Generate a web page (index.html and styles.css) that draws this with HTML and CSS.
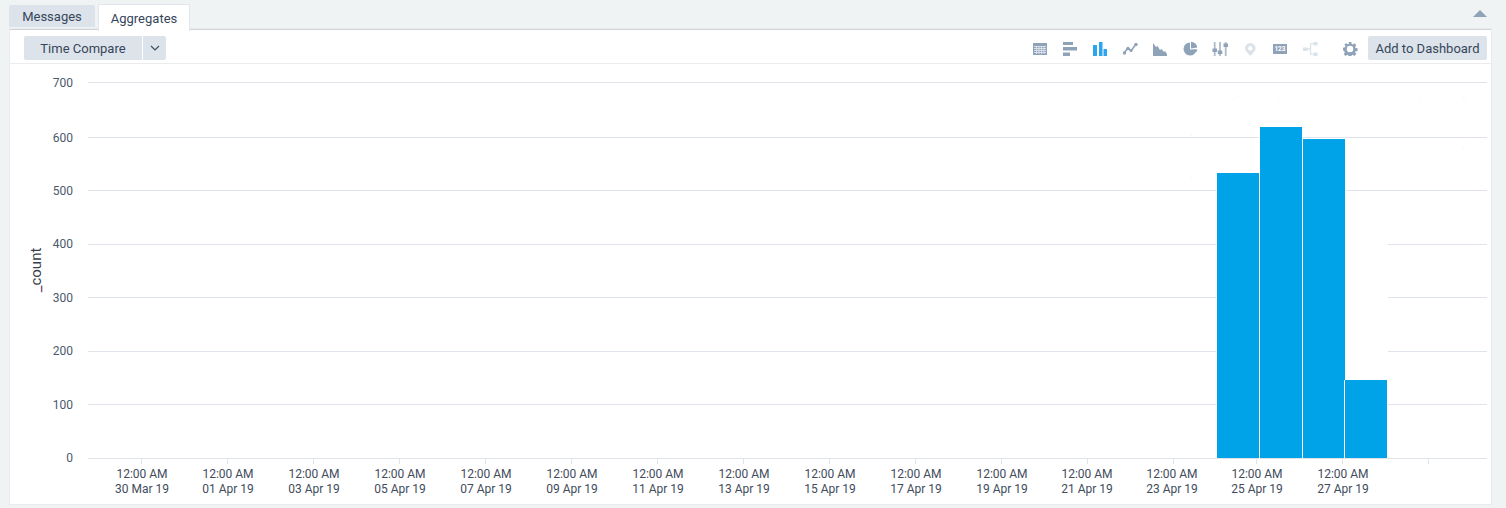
FILE: index.html
```html
<!DOCTYPE html>
<html lang="en">
<head>
<meta charset="utf-8">
<title>Aggregates</title>
<link rel="stylesheet" href="styles.css">
</head>
<body>
<div class="tabbar">
  <div class="tab">Messages</div>
  <div class="tab tab-active">Aggregates</div>
  <svg class="collapse" width="14" height="7" viewBox="0 0 14 7"><path d="M7 0L14 7H0z"/></svg>
</div>
<main class="panel">
  <div class="toolbar">
    <div class="group">
      <button class="btn btn-compare">Time Compare</button>
      <button class="btn btn-caret"><svg width="10" height="6" viewBox="0 0 10 6"><path d="M1 1l4 4 4-4" fill="none" stroke="#3d4f63" stroke-width="1.2"/></svg></button>
    </div>
    <div class="group">
      <div class="icons">
        <svg class="icon" width="16" height="16" viewBox="0 0 16 16"><path class="i" d="M1 3h14v12H1z"/><path d="M2 6.500h12M2 8.500h12M2 10.500h12M2 12.500h12M4.500 6v8M7 6v8M9.500 6v8M12 6v8" stroke="#e6eaf4" stroke-width=".8" fill="none"/></svg>
        <svg class="icon" width="16" height="16" viewBox="0 0 16 16"><path class="i" d="M1 2h10v3H1zM1 7h14v3.500H1zM1 12.500h7V16H1z"/></svg>
        <svg class="icon" width="16" height="16" viewBox="0 0 16 16"><path class="on" d="M1 5h4v11H1zM7 2h3.500v14H7zM11.500 9H15v7h-3.500z"/></svg>
        <svg class="icon" width="16" height="16" viewBox="0 0 16 16"><path d="M2 13l4-5 3 3 5-7" fill="none" stroke="#8fa3b8" stroke-width="1.600"/><circle class="i" cx="2.500" cy="13" r="1.700"/><circle class="i" cx="6" cy="8.500" r="1.700"/><circle class="i" cx="9" cy="10.500" r="1.500"/><circle class="i" cx="14" cy="4.500" r="1.700"/></svg>
        <svg class="icon" width="16" height="16" viewBox="0 0 16 16"><path class="i" d="M1 3l3 4 1.500-1L8 10l1.500-1L12 12l1-1 2 3v2H1z"/></svg>
        <svg class="icon" width="16" height="16" viewBox="0 0 16 16"><path class="i" d="M8 2.500a6.500 6.500 0 1 0 6.500 7H8z"/><path class="i" d="M9 1.800a6.500 6.500 0 0 1 6.300 5.700L9 8.500z"/><path class="i" d="M10 9.500h5.300a6 6 0 0 1-.8 2.500z"/></svg>
        <svg class="icon" width="16" height="16" viewBox="0 0 16 16"><path d="M2.700 2v14M8 2v14M13.700 2v14" stroke="#aebbc9" stroke-width="1.800"/><path class="i" d="M.5 8.500h4.500V12H.5zM5.800 10.500h4.500V14H5.800zM11.500 3.500H16V7h-4.500z"/></svg>
        <svg class="icon" width="16" height="16" viewBox="0 0 16 16"><path class="off" fill-rule="evenodd" d="M8.300 3a5.300 5.300 0 0 1 5.300 5.300c0 2.700-3 5.200-5.300 7.700C6 13.500 3 11 3 8.300A5.300 5.300 0 0 1 8.300 3zm0 3a2.200 2.200 0 1 0 0 4.400 2.200 2.200 0 0 0 0-4.400z"/></svg>
        <svg class="icon" width="16" height="16" viewBox="0 0 16 16"><path class="i" d="M1 4h14v10H1z"/><text x="8" y="11" class="num">123</text></svg>
        <svg class="icon" width="16" height="16" viewBox="0 0 16 16"><path class="off" d="M1 7.500h4.500v3.500H1zM11.500 2H15.500v3.500h-4zM11.500 12.500h4V16h-4z"/><path d="M5 9h3.500M8.500 3.700h3M8.500 14.200h3M8.500 3.700v10.500" stroke="#dbe3ea" stroke-width="1.300" fill="none"/></svg>
      </div>
      <svg class="gear" width="16" height="16" viewBox="0 0 16 16"><path class="i" fill-rule="evenodd" d="M6.500 0h3l.4 2.200 1.300.6L13.100 1.500l2.100 2.100-1.300 1.900.6 1.300 2.200.4v3l-2.200.4-.6 1.300 1.300 1.900-2.100 2.100-1.900-1.300-1.300.6-.4 2.200h-3l-.4-2.200-1.300-.6-1.900 1.300-2.100-2.100 1.300-1.900-.6-1.300L0 9.500v-3l2.200-.4.6-1.300-1.300-1.900L3.600 1.300l1.900 1.300 1.300-.6zM8 4.300a3.700 3.700 0 1 0 0 7.400 3.700 3.700 0 0 0 0-7.400z" transform="translate(1 2) scale(.875)"/></svg>
      <button class="btn btn-dash">Add to Dashboard</button>
    </div>
  </div>
  <svg class="chart" width="1481" height="440" viewBox="10 64 1481 440">
    <g class="grid">
      <path d="M88 82.500H1487M88 137.500H1259M1303 137.500H1487M88 190.500H1216M1346 190.500H1487M88 244.500H1216M1388 244.500H1487M88 297.500H1216M1388 297.500H1487M88 351.500H1216M1388 351.500H1487M88 404.500H1216M1388 404.500H1487M88 458.500H1487"/>
      <path d="M141.500 459v5M227.500 459v5M313.500 459v5M399.500 459v5M485.500 459v5M571.500 459v5M657.500 459v5M743.500 459v5M829.500 459v5M915.500 459v5M1001.500 459v5M1087.500 459v5M1173.500 459v5M1256.500 459v5M1342.500 459v5M1428.500 459v5"/>
    </g>
    <g class="dots">
      <circle cx="1191" cy="135" r=".5"/><circle cx="1191" cy="178" r=".5"/><circle cx="1237" cy="96" r=".5"/><circle cx="1234" cy="99" r=".5"/><circle cx="1280" cy="98" r=".5"/><circle cx="1277" cy="101" r=".5"/><circle cx="1420" cy="96" r=".5"/><circle cx="1463" cy="98" r=".5"/><circle cx="1466" cy="101" r=".5"/><circle cx="1463" cy="147" r=".5"/><circle cx="1466" cy="144" r=".5"/>
    </g>
    <g class="bars">
      <rect x="1217" y="173" width="42" height="285"/>
      <rect x="1260" y="127" width="42" height="331"/>
      <rect x="1303" y="139" width="42" height="319"/>
      <rect x="1345" y="380" width="42" height="78"/>
      <path class="bar-gap" d="M1344.500 380v78"/>
    </g>
    <g class="ylabels">
      <text x="73" y="87">700</text><text x="73" y="142">600</text><text x="73" y="195">500</text><text x="73" y="248">400</text><text x="73" y="302">300</text><text x="73" y="355">200</text><text x="73" y="409">100</text><text x="73" y="462">0</text>
    </g>
    <text class="ytitle" transform="translate(41 270) rotate(-90)"><tspan class="under">_</tspan>count</text>
    <g class="xlabels">
      <text y="478"><tspan x="142">12:00 AM</tspan><tspan x="142" dy="15">30 Mar 19</tspan></text>
      <text y="478"><tspan x="228">12:00 AM</tspan><tspan x="228" dy="15">01 Apr 19</tspan></text>
      <text y="478"><tspan x="314">12:00 AM</tspan><tspan x="314" dy="15">03 Apr 19</tspan></text>
      <text y="478"><tspan x="400">12:00 AM</tspan><tspan x="400" dy="15">05 Apr 19</tspan></text>
      <text y="478"><tspan x="486">12:00 AM</tspan><tspan x="486" dy="15">07 Apr 19</tspan></text>
      <text y="478"><tspan x="572">12:00 AM</tspan><tspan x="572" dy="15">09 Apr 19</tspan></text>
      <text y="478"><tspan x="658">12:00 AM</tspan><tspan x="658" dy="15">11 Apr 19</tspan></text>
      <text y="478"><tspan x="744">12:00 AM</tspan><tspan x="744" dy="15">13 Apr 19</tspan></text>
      <text y="478"><tspan x="830">12:00 AM</tspan><tspan x="830" dy="15">15 Apr 19</tspan></text>
      <text y="478"><tspan x="916">12:00 AM</tspan><tspan x="916" dy="15">17 Apr 19</tspan></text>
      <text y="478"><tspan x="1002">12:00 AM</tspan><tspan x="1002" dy="15">19 Apr 19</tspan></text>
      <text y="478"><tspan x="1087">12:00 AM</tspan><tspan x="1087" dy="15">21 Apr 19</tspan></text>
      <text y="478"><tspan x="1172">12:00 AM</tspan><tspan x="1172" dy="15">23 Apr 19</tspan></text>
      <text y="478"><tspan x="1257">12:00 AM</tspan><tspan x="1257" dy="15">25 Apr 19</tspan></text>
      <text y="478"><tspan x="1343">12:00 AM</tspan><tspan x="1343" dy="15">27 Apr 19</tspan></text>
    </g>
  </svg>
</main>
</body>
</html>
```

FILE: styles.css
```css
* { box-sizing: border-box; }
html, body { margin: 0; height: 100%; }
body {
  background: #f0f3f4;
  font-family: Roboto, "Liberation Sans", sans-serif;
  font-size: 13px;
  color: #36465a;
  overflow: hidden;
}
.tabbar {
  display: flex;
  align-items: flex-end;
  gap: 3px;
  height: 30px;
  padding: 0 19px 0 9px;
  position: relative;
}
.tab {
  height: 22px;
  width: 86px;
  margin-bottom: 3px;
  background: #dce3ea;
  text-align: center;
  line-height: 24px;
  border-radius: 2px 2px 0 0;
}
.tab-active {
  width: 92px;
  height: 27px;
  margin-bottom: 0;
  background: #fff;
  border: 1px solid #dfe5ea;
  border-bottom: 0;
  line-height: 27px;
  position: relative;
  top: 1px;
}
.collapse {
  position: absolute;
  right: 19px;
  top: 10px;
  fill: #8fa3b8;
}
.panel {
  width: 1481px;
  height: 475px;
  margin: -1px 0 0 10px;
  background: #fff;
  border-top: 1px solid #d0d4d8;
  box-shadow: 0 0 0 1px #e8ecee;
}
.toolbar {
  display: flex;
  justify-content: space-between;
  align-items: flex-start;
  height: 34px;
  padding: 6px 4px 0 14px;
  border-bottom: 1px solid #e9edf0;
}
.group { display: flex; align-items: center; }
.btn {
  border: 0;
  height: 24px;
  padding: 0;
  background: #dce3ea;
  color: #36465a;
  font: 13px Roboto, "Liberation Sans", sans-serif;
  border-radius: 2px;
}
.btn-compare { width: 118px; border-radius: 2px 0 0 2px; }
.btn-caret {
  width: 23px;
  margin-left: 1px;
  border-radius: 0 2px 2px 0;
  display: flex;
  align-items: center;
  justify-content: center;
}
.btn-dash { width: 119px; margin-left: 10px; }
.icons { display: flex; gap: 14px; }
.icon { display: block; }
.gear { margin-left: 24px; }
.i { fill: #8fa3b8; }
.on { fill: #2ba6ee; }
.off { fill: #dbe3ea; }
.num {
  fill: #fff;
  font: bold 6.5px Roboto, sans-serif;
  text-anchor: middle;
}
.chart { display: block; }
.grid path { fill: none; stroke: #dfe4ea; stroke-width: 1; }
.dots circle { fill: #dde1e5; }
.bars rect { fill: #00a3e8; }
.bar-gap { stroke: #fff; stroke-width: 1; fill: none; }
.ylabels text {
  font: 12px Roboto, "Liberation Sans", sans-serif;
  fill: #4b5a6b;
  text-anchor: end;
}
.ytitle {
  font: 15px Roboto, "Liberation Sans", sans-serif;
  fill: #3a3f4d;
  text-anchor: middle;
}
.under { fill: #6a2a6a; }
.xlabels text {
  font: 12px Roboto, "Liberation Sans", sans-serif;
  fill: #3f4c5c;
  text-anchor: middle;
}
```
